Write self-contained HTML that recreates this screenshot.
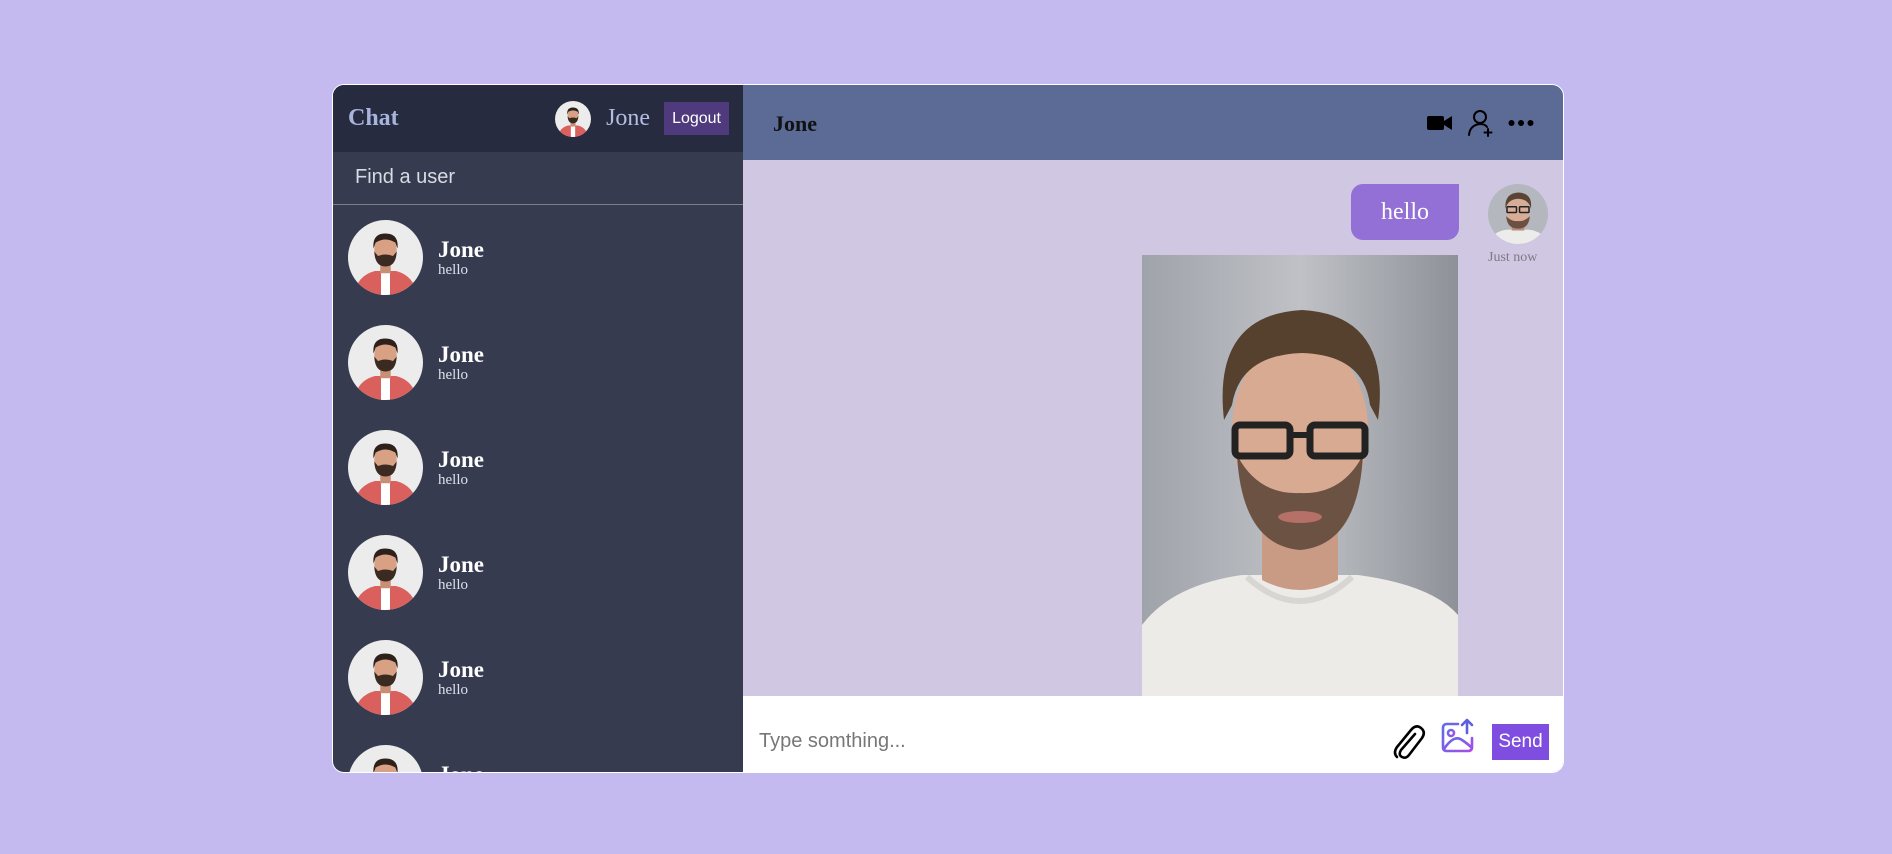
<!DOCTYPE html>
<html><head><meta charset="utf-8"><style>
*{box-sizing:border-box;margin:0;padding:0}
body{width:1892px;height:854px;background:#c4baf0;position:relative;overflow:hidden;font-family:"Liberation Serif",serif}
.box{position:absolute;left:332px;top:84px;width:1232px;height:689px;border-radius:12px;overflow:hidden;border:1px solid #fff;display:flex}
.side{width:410px;background:#363b4f;position:relative;overflow:hidden}
.nav{height:67px;background:#262b3f;display:flex;align-items:center;padding:0 14px 0 15px;position:relative}
.nav .logo{color:#a8b4dd;font-weight:bold;font-size:24px}
.nav .u{margin-left:auto;display:flex;align-items:center}
.nav .u span{color:#b4bde0;font-size:24px;margin:0 14px 0 15px}
.btn{background:#4f3a7e;color:#fff;font-family:"Liberation Sans",sans-serif;font-size:16px;padding:7px 8px;height:33px;line-height:19px}
.search{height:53px;border-bottom:1px solid #7d7f8a;color:#d9dbe3;font-family:"Liberation Sans",sans-serif;font-size:20px;padding:14px 0 0 22px}
.row{height:105px;display:flex;align-items:center;padding:0 0 0 15px}
.row .av{width:75px;height:75px;flex:none}
.row .t{margin-left:15px;color:#fff}
.row .t b{display:block;font-size:23px;line-height:24px}
.row .t i{font-style:normal;font-size:15px;color:#dde0ea;display:block;line-height:16px}
.main{flex:1;background:#d0c7e3;position:relative;overflow:hidden}
.hd{height:75px;background:#5b6b96;position:relative}
.hd b{position:absolute;left:30px;top:26px;font-size:22px;color:#111}
.inp{position:absolute;left:0;right:0;bottom:0;height:76px;background:#fff}
.inp .ph{position:absolute;left:16px;top:34px;font-family:"Liberation Sans",sans-serif;font-size:20px;color:#777}
.send{position:absolute;left:749px;top:28px;width:57px;height:36px;background:#7f4de0;color:#fff;font-family:"Liberation Sans",sans-serif;font-size:19px;text-align:center;line-height:36px}
.bub{position:absolute;left:608px;top:99px;width:108px;height:56px;background:#9370d6;border-radius:12px 0 12px 12px;color:#fff;font-size:24px;text-align:center;line-height:56px}
.jn{position:absolute;left:745px;top:165px;font-size:14px;color:#7d7a84}
</style></head><body>
<div class="box">
<div class="side">
<div class="nav"><div class="logo">Chat</div><div class="u">
<svg width="36" height="36" viewBox="0 0 100 100"><clipPath id="c0"><circle cx="50" cy="50" r="50"/></clipPath><g clip-path="url(#c0)"><rect width="100" height="100" fill="#ececec"/><path d="M8 100Q12 74 36 68L64 68Q88 74 92 100Z" fill="#d9605c"/><rect x="44" y="70" width="12" height="30" fill="#fff"/><rect x="43" y="55" width="14" height="16" fill="#c98f74"/><ellipse cx="50" cy="40" rx="15" ry="19" fill="#d9a184"/><path d="M35 42Q36 62 50 62Q64 62 65 42L60 48Q50 44 40 48Z" fill="#3a2a22"/><path d="M34 38Q32 18 50 18Q68 18 66 38L63 30Q50 22 37 30Z" fill="#2e211b"/></g></svg>
<span>Jone</span><div class="btn">Logout</div></div></div>
<div class="search">Find a user</div>
<div class="row"><svg class="av" viewBox="0 0 100 100"><clipPath id="c1"><circle cx="50" cy="50" r="50"/></clipPath><g clip-path="url(#c1)"><rect width="100" height="100" fill="#ececec"/><path d="M8 100Q12 74 36 68L64 68Q88 74 92 100Z" fill="#d9605c"/><rect x="44" y="70" width="12" height="30" fill="#fff"/><rect x="43" y="55" width="14" height="16" fill="#c98f74"/><ellipse cx="50" cy="40" rx="15" ry="19" fill="#d9a184"/><path d="M35 42Q36 62 50 62Q64 62 65 42L60 48Q50 44 40 48Z" fill="#3a2a22"/><path d="M34 38Q32 18 50 18Q68 18 66 38L63 30Q50 22 37 30Z" fill="#2e211b"/></g></svg><div class="t"><b>Jone</b><i>hello</i></div></div>
<div class="row"><svg class="av" viewBox="0 0 100 100"><clipPath id="c2"><circle cx="50" cy="50" r="50"/></clipPath><g clip-path="url(#c2)"><rect width="100" height="100" fill="#ececec"/><path d="M8 100Q12 74 36 68L64 68Q88 74 92 100Z" fill="#d9605c"/><rect x="44" y="70" width="12" height="30" fill="#fff"/><rect x="43" y="55" width="14" height="16" fill="#c98f74"/><ellipse cx="50" cy="40" rx="15" ry="19" fill="#d9a184"/><path d="M35 42Q36 62 50 62Q64 62 65 42L60 48Q50 44 40 48Z" fill="#3a2a22"/><path d="M34 38Q32 18 50 18Q68 18 66 38L63 30Q50 22 37 30Z" fill="#2e211b"/></g></svg><div class="t"><b>Jone</b><i>hello</i></div></div>
<div class="row"><svg class="av" viewBox="0 0 100 100"><clipPath id="c3"><circle cx="50" cy="50" r="50"/></clipPath><g clip-path="url(#c3)"><rect width="100" height="100" fill="#ececec"/><path d="M8 100Q12 74 36 68L64 68Q88 74 92 100Z" fill="#d9605c"/><rect x="44" y="70" width="12" height="30" fill="#fff"/><rect x="43" y="55" width="14" height="16" fill="#c98f74"/><ellipse cx="50" cy="40" rx="15" ry="19" fill="#d9a184"/><path d="M35 42Q36 62 50 62Q64 62 65 42L60 48Q50 44 40 48Z" fill="#3a2a22"/><path d="M34 38Q32 18 50 18Q68 18 66 38L63 30Q50 22 37 30Z" fill="#2e211b"/></g></svg><div class="t"><b>Jone</b><i>hello</i></div></div>
<div class="row"><svg class="av" viewBox="0 0 100 100"><clipPath id="c4"><circle cx="50" cy="50" r="50"/></clipPath><g clip-path="url(#c4)"><rect width="100" height="100" fill="#ececec"/><path d="M8 100Q12 74 36 68L64 68Q88 74 92 100Z" fill="#d9605c"/><rect x="44" y="70" width="12" height="30" fill="#fff"/><rect x="43" y="55" width="14" height="16" fill="#c98f74"/><ellipse cx="50" cy="40" rx="15" ry="19" fill="#d9a184"/><path d="M35 42Q36 62 50 62Q64 62 65 42L60 48Q50 44 40 48Z" fill="#3a2a22"/><path d="M34 38Q32 18 50 18Q68 18 66 38L63 30Q50 22 37 30Z" fill="#2e211b"/></g></svg><div class="t"><b>Jone</b><i>hello</i></div></div>
<div class="row"><svg class="av" viewBox="0 0 100 100"><clipPath id="c5"><circle cx="50" cy="50" r="50"/></clipPath><g clip-path="url(#c5)"><rect width="100" height="100" fill="#ececec"/><path d="M8 100Q12 74 36 68L64 68Q88 74 92 100Z" fill="#d9605c"/><rect x="44" y="70" width="12" height="30" fill="#fff"/><rect x="43" y="55" width="14" height="16" fill="#c98f74"/><ellipse cx="50" cy="40" rx="15" ry="19" fill="#d9a184"/><path d="M35 42Q36 62 50 62Q64 62 65 42L60 48Q50 44 40 48Z" fill="#3a2a22"/><path d="M34 38Q32 18 50 18Q68 18 66 38L63 30Q50 22 37 30Z" fill="#2e211b"/></g></svg><div class="t"><b>Jone</b><i>hello</i></div></div>
<div class="row"><svg class="av" viewBox="0 0 100 100"><clipPath id="c6"><circle cx="50" cy="50" r="50"/></clipPath><g clip-path="url(#c6)"><rect width="100" height="100" fill="#ececec"/><path d="M8 100Q12 74 36 68L64 68Q88 74 92 100Z" fill="#d9605c"/><rect x="44" y="70" width="12" height="30" fill="#fff"/><rect x="43" y="55" width="14" height="16" fill="#c98f74"/><ellipse cx="50" cy="40" rx="15" ry="19" fill="#d9a184"/><path d="M35 42Q36 62 50 62Q64 62 65 42L60 48Q50 44 40 48Z" fill="#3a2a22"/><path d="M34 38Q32 18 50 18Q68 18 66 38L63 30Q50 22 37 30Z" fill="#2e211b"/></g></svg><div class="t"><b>Jone</b><i>hello</i></div></div>
</div>
<div class="main">
<div class="hd"><b>Jone</b>
<svg style="position:absolute;left:684px;top:29px" width="26" height="18" viewBox="0 0 26 18"><rect x="0" y="2" width="17" height="14" rx="2" fill="#000"/><path d="M17 7L25 2V16L17 11Z" fill="#000"/></svg>
<svg style="position:absolute;left:724px;top:24px" width="28" height="28" viewBox="0 0 28 28" fill="none" stroke="#000" stroke-width="2" stroke-linecap="round"><circle cx="13" cy="8" r="6"/><path d="M2 26Q3 16 13 15Q18 15 20 18"/><path d="M21 20V27M17.5 23.5H24.5"/></svg>
<svg style="position:absolute;left:765px;top:34px" width="26" height="8" viewBox="0 0 26 8" fill="#000"><circle cx="3.5" cy="4" r="3"/><circle cx="13" cy="4" r="3"/><circle cx="22.5" cy="4" r="3"/></svg>
</div>
<div class="bub">hello</div>
<svg style="position:absolute;left:745px;top:99px" width="60" height="60" viewBox="0 0 316 316"><clipPath id="cm"><circle cx="158" cy="158" r="158"/></clipPath><g clip-path="url(#cm)"><rect width="316" height="316" fill="#b4b7bd"/><path d="M0 316Q20 250 100 240L216 240Q296 250 316 316Z" fill="#ececea"/><rect x="125" y="190" width="66" height="55" fill="#b88e7a"/><ellipse cx="158" cy="140" rx="62" ry="82" fill="#d7ad98"/><path d="M96 170Q100 235 158 235Q216 235 220 170Q190 200 158 195Q126 200 96 170Z" fill="#6c5041"/><path d="M92 130Q85 50 160 45Q236 48 226 130Q215 80 160 78Q105 80 92 130Z" fill="#5a4535"/><rect x="100" y="120" width="50" height="30" rx="4" fill="none" stroke="#222" stroke-width="8"/><rect x="166" y="120" width="50" height="30" rx="4" fill="none" stroke="#222" stroke-width="8"/></g></svg>
<div class="jn">Just now</div>
<svg style="position:absolute;left:399px;top:170px" width="316" height="442" viewBox="0 0 316 442"><defs><linearGradient id="bg" x1="0" x2="1"><stop offset="0" stop-color="#9fa3aa"/><stop offset=".5" stop-color="#bfc1c6"/><stop offset="1" stop-color="#8e9298"/></linearGradient></defs><rect width="316" height="442" fill="url(#bg)"/><path d="M0 442L0 370Q30 330 100 320L216 320Q290 330 316 360L316 442Z" fill="#ecebe8"/><path d="M105 322Q158 370 210 322" fill="none" stroke="#d8d6d2" stroke-width="6"/><path d="M120 240L120 325Q158 345 196 325L196 240Z" fill="#c99a84"/><ellipse cx="158" cy="175" rx="68" ry="92" fill="#d8aa92"/><path d="M95 200Q100 290 158 295Q216 290 221 200Q200 240 158 238Q116 240 95 200Z" fill="#6b5243"/><ellipse cx="158" cy="262" rx="22" ry="6" fill="#b57068"/><path d="M82 165Q70 60 160 55Q250 60 236 165L228 150Q222 100 160 98Q98 100 90 150Z" fill="#56412f"/><rect x="93" y="170" width="55" height="31" rx="5" fill="none" stroke="#222" stroke-width="7"/><rect x="168" y="170" width="55" height="31" rx="5" fill="none" stroke="#222" stroke-width="7"/><path d="M148 180H168" stroke="#222" stroke-width="6"/></svg>
<div class="inp"><div class="ph">Type somthing...</div>
<svg style="position:absolute;left:648px;top:26px" width="36" height="40" viewBox="0 0 36 40" fill="none" stroke="#000" stroke-width="2.6" stroke-linecap="round"><path d="M24 12L10 28Q7 33 11 35Q15 37 18 33L31 16Q35 10 30 6Q25 2 20 8L6 25Q2 31 6 35"/></svg>
<svg style="position:absolute;left:697px;top:22px" width="36" height="36" viewBox="0 0 36 36" fill="none" stroke-width="2.6" stroke-linecap="round" stroke-linejoin="round"><defs><linearGradient id="ig" x1="0" y1="0" x2="1" y2="1"><stop offset="0" stop-color="#5b6de8"/><stop offset="1" stop-color="#a84de6"/></linearGradient></defs><path d="M18 6H7Q3 6 3 10V29Q3 33 7 33H28Q32 33 32 29V20" stroke="url(#ig)"/><circle cx="11" cy="15" r="3" stroke="url(#ig)"/><path d="M4 31Q14 16 22 22Q28 26 32 30" stroke="url(#ig)"/><path d="M27 15V2M22 7L27 2L32 7" stroke="#5b5fe0"/></svg>
<div class="send">Send</div></div>
</div>
</div>
</body></html>
